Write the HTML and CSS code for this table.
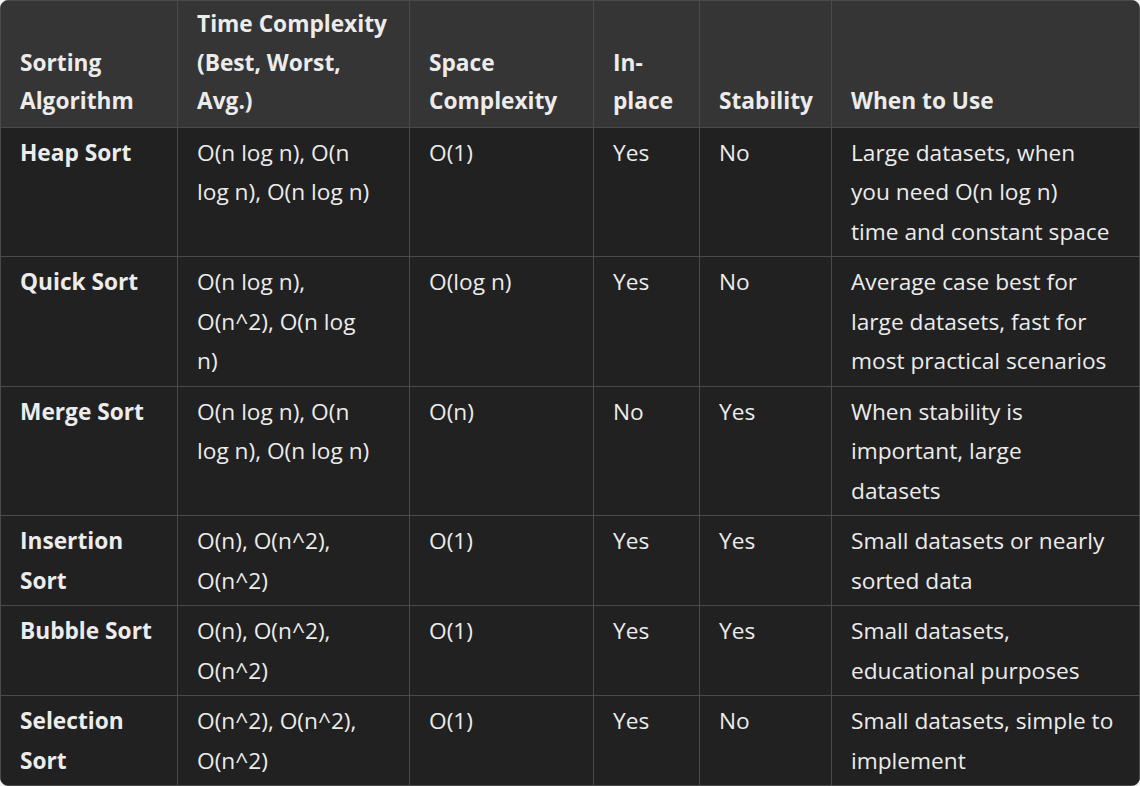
FILE: index.html
```html
<!DOCTYPE html>
<html lang="en">
<head>
<meta charset="utf-8">
<title>Sorting Algorithms</title>
<link rel="stylesheet" href="styles.css">
</head>
<body>
<div class="wrap">
<table class="grid">
<colgroup>
<col class="c1"><col class="c2"><col class="c3"><col class="c4"><col class="c5"><col class="c6">
</colgroup>
<thead>
<tr>
<th>Sorting<br>Algorithm</th>
<th>Time Complexity<br>(Best, Worst,<br>Avg.)</th>
<th>Space<br>Complexity</th>
<th>In-<br>place</th>
<th>Stability</th>
<th>When to Use</th>
</tr>
</thead>
<tbody>
<tr>
<td><strong>Heap Sort</strong></td>
<td>O(n log n), O(n<br>log n), O(n log n)</td>
<td>O(1)</td>
<td>Yes</td>
<td>No</td>
<td>Large datasets, when<br>you need O(n log n)<br>time and constant space</td>
</tr>
<tr>
<td><strong>Quick Sort</strong></td>
<td>O(n log n),<br>O(n^2), O(n log<br>n)</td>
<td>O(log n)</td>
<td>Yes</td>
<td>No</td>
<td>Average case best for<br>large datasets, fast for<br>most practical scenarios</td>
</tr>
<tr>
<td><strong>Merge Sort</strong></td>
<td>O(n log n), O(n<br>log n), O(n log n)</td>
<td>O(n)</td>
<td>No</td>
<td>Yes</td>
<td>When stability is<br>important, large<br>datasets</td>
</tr>
<tr>
<td><strong>Insertion<br>Sort</strong></td>
<td>O(n), O(n^2),<br>O(n^2)</td>
<td>O(1)</td>
<td>Yes</td>
<td>Yes</td>
<td>Small datasets or nearly<br>sorted data</td>
</tr>
<tr>
<td><strong>Bubble Sort</strong></td>
<td>O(n), O(n^2),<br>O(n^2)</td>
<td>O(1)</td>
<td>Yes</td>
<td>Yes</td>
<td>Small datasets,<br>educational purposes</td>
</tr>
<tr>
<td><strong>Selection<br>Sort</strong></td>
<td>O(n^2), O(n^2),<br>O(n^2)</td>
<td>O(1)</td>
<td>Yes</td>
<td>No</td>
<td>Small datasets, simple to<br>implement</td>
</tr>
</tbody>
</table>
</div>
</body>
</html>
```
FILE: styles.css
```css
* { box-sizing: border-box; }
html, body {
  margin: 0;
  padding: 0;
  background: #f4f4f4;
}
body {
  font-family: "Open Sans", "Noto Sans", sans-serif;
  color: #ececec;
}
.wrap {
  width: 1140px;
  height: 786px;
  border: 1px solid #4a4a4a;
  border-radius: 8px;
  overflow: hidden;
  background: #212121;
}
.grid {
  width: 1138px;
  table-layout: fixed;
  border-collapse: separate;
  border-spacing: 0;
  font-family: "Open Sans", "Noto Sans", sans-serif;
}
.c1 { width: 177px; }
.c2 { width: 232px; }
.c3 { width: 184px; }
.c4 { width: 106px; }
.c5 { width: 132px; }
.c6 { width: 307px; }
.grid th,
.grid td {
  font-size: 22.7px;
  text-align: left;
  border-right: 1px solid #4a4a4a;
  border-bottom: 1px solid #4a4a4a;
  color: #ececec;
}
.grid th:last-child,
.grid td:last-child { border-right: none; }
.grid th {
  background: #353535;
  font-weight: 700;
  vertical-align: bottom;
  line-height: 38.5px;
  padding: 4px 14px 6px 19px;
}
.grid td {
  background: #212121;
  vertical-align: top;
  font-weight: 400;
  line-height: 39.5px;
  padding: 5px 14px 5px 19px;
}
.grid tbody tr:last-child td { border-bottom: none; }
.grid strong { font-weight: 700; }
```
